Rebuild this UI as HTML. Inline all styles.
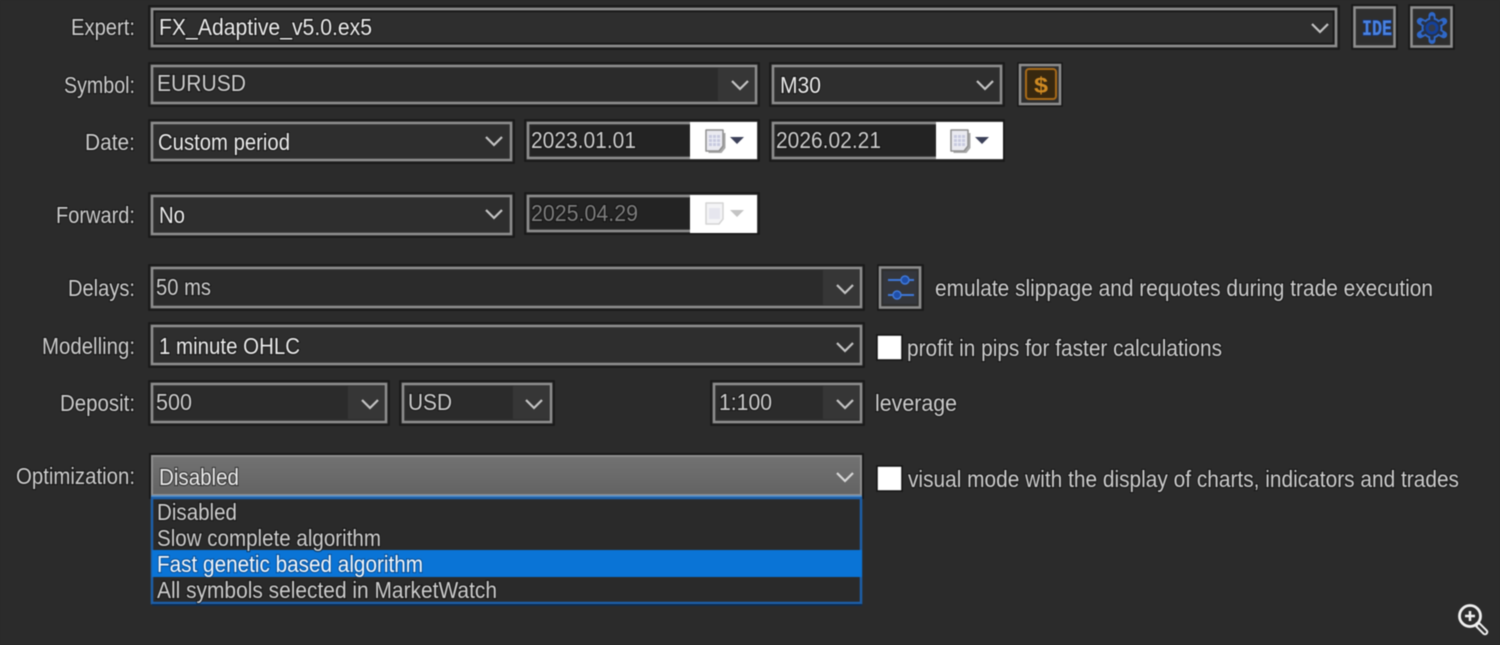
<!DOCTYPE html>
<html><head><meta charset="utf-8"><style>
html,body{margin:0;padding:0;background:#2b2b2b;width:1500px;height:645px;overflow:hidden}
svg{display:block;filter:blur(.55px)}
text{font-family:"Liberation Sans",sans-serif;font-size:23px;fill:#cdcdcd;stroke:rgba(10,10,10,.55);stroke-width:2.2px;paint-order:stroke}
.b{fill:#2e2e2e;stroke:#8e8e8e;stroke-width:2.5}
.h{fill:none;stroke:#181818;stroke-width:1.6}
.ed{fill:#2b2b2b}
.ar{fill:#363636}
.c{fill:none;stroke:#c4c4c4;stroke-width:2.2}
.w{fill:#ececec}
.d{fill:#7d7d7d}
</style></head><body>
<svg width="1500" height="645" viewBox="0 0 1500 645" xmlns="http://www.w3.org/2000/svg">
<rect width="1500" height="645" fill="#2b2b2b"/>

<!-- Labels -->
<g text-anchor="start">
<text x="71" y="35" textLength="64" lengthAdjust="spacingAndGlyphs">Expert:</text>
<text x="64" y="93" textLength="71" lengthAdjust="spacingAndGlyphs">Symbol:</text>
<text x="85" y="150" textLength="50" lengthAdjust="spacingAndGlyphs">Date:</text>
<text x="56" y="223" textLength="79" lengthAdjust="spacingAndGlyphs">Forward:</text>
<text x="68" y="296" textLength="67" lengthAdjust="spacingAndGlyphs">Delays:</text>
<text x="42" y="354" textLength="93" lengthAdjust="spacingAndGlyphs">Modelling:</text>
<text x="60" y="411" textLength="75" lengthAdjust="spacingAndGlyphs">Deposit:</text>
<text x="16" y="484" textLength="119" lengthAdjust="spacingAndGlyphs">Optimization:</text>
</g>

<!-- Expert -->
<rect x="149" y="6" width="1190" height="43" class="h"/>
<rect x="152" y="9" width="1184" height="37" class="b"/>
<rect x="154.500" y="11.500" width="1179" height="32" class="h" stroke-width="1"/>
<text x="159" y="35" textLength="213" lengthAdjust="spacingAndGlyphs" class="w">FX_Adaptive_v5.0.ex5</text>
<path d="M1312 24l8 8 8-8" class="c"/>

<!-- IDE button -->
<rect x="1352" y="5" width="45" height="44" class="h"/>
<rect x="1354.500" y="7.500" width="40" height="39" class="b"/>
<text x="1362" y="35" textLength="30" lengthAdjust="spacingAndGlyphs" style="fill:#4a82e0;stroke:#173a80;stroke-width:1.500px;font-size:22px;font-weight:bold;font-family:'Liberation Mono',monospace">IDE</text>

<!-- Gear button -->
<rect x="1409" y="5" width="45" height="44" class="h"/>
<rect x="1411.500" y="7.500" width="40" height="39" class="b"/>
<path d="M1432 15.500v3.500M1443.700 21.250l-3 1.750M1443.700 34.750l-3-1.750M1432 40.500v-3.500M1420.300 34.750l3-1.750M1420.300 21.250l3 1.750" stroke="#2f68c8" stroke-width="7" stroke-linecap="round" fill="none"/>
<circle cx="1432" cy="28" r="10.500" fill="#2f68c8"/>
<path d="M1432 17.500v2M1441 22.750l-1.700 1M1441 33.250l-1.700-1M1432 38.500v-2M1423 33.250l1.700-1M1423 22.750l1.700 1" stroke="#26324a" stroke-width="3.500" stroke-linecap="round" fill="none"/>
<circle cx="1432" cy="28" r="8.500" fill="#26324a"/>
<circle cx="1432" cy="28" r="5" fill="#343c4c" stroke="#14409a" stroke-width="3"/>

<!-- Symbol -->
<rect x="149" y="63" width="610" height="43" class="h"/>
<rect x="152" y="66" width="604" height="37" class="b"/>
<rect x="154" y="68" width="564" height="33" class="ed"/>
<rect x="718" y="68" width="36" height="33" class="ar"/>
<text x="157" y="91" textLength="89" lengthAdjust="spacingAndGlyphs">EURUSD</text>
<path d="M732 81l8 8 8-8" class="c"/>

<!-- M30 -->
<rect x="770" y="63" width="234" height="43" class="h"/>
<rect x="773" y="66" width="228" height="37" class="b"/>
<text x="780" y="93" textLength="41" lengthAdjust="spacingAndGlyphs" class="w">M30</text>
<path d="M977 81l8 8 8-8" class="c"/>

<!-- Dollar button -->
<rect x="1018" y="63" width="44" height="43" class="h"/>
<rect x="1020" y="65" width="40" height="39" class="b"/>
<rect x="1026" y="69" width="30" height="30" rx="3" fill="#38280f" stroke="#a86a18" stroke-width="2"/>
<text x="1034" y="93" textLength="14" lengthAdjust="spacingAndGlyphs" style="fill:#cf8a22;stroke:none;font-size:22px;font-weight:bold">$</text>

<!-- Date -->
<rect x="149" y="120" width="365" height="43" class="h"/>
<rect x="152" y="123" width="359" height="37" class="b"/>
<text x="158" y="150" textLength="132" lengthAdjust="spacingAndGlyphs" class="w">Custom period</text>
<path d="M486 137l8 8 8-8" class="c"/>

<!-- Date from -->
<rect x="525" y="120" width="234" height="41" class="h"/>
<rect x="528" y="123" width="228" height="35" class="b"/>
<rect x="530" y="125" width="160" height="31" fill="#232323"/>
<rect x="690" y="122" width="67" height="37" fill="#fff"/>
<text x="531" y="148" textLength="105" lengthAdjust="spacingAndGlyphs">2023.01.01</text>
<path d="M707 132h17v15l-4 5h-13z" fill="#a8a8a8" transform="translate(1.500 1)"/>
<path d="M706 130h17v16l-4 5h-13z" fill="#eaeaf0" stroke="#8f8f8f" stroke-width="1.500" stroke-linejoin="round"/>
<rect x="709" y="135" width="11" height="11" fill="#c8cadf"/>
<path d="M712.500 135v11M716.500 135v11M709 138.500h11M709 142.500h11" stroke="#eceef6" stroke-width="1"/>
<path d="M730 137h14l-7 7z" fill="#3b4058"/>

<!-- Date to -->
<rect x="770" y="120" width="234" height="41" class="h"/>
<rect x="773" y="123" width="228" height="35" class="b"/>
<rect x="775" y="125" width="161" height="31" fill="#232323"/>
<rect x="936" y="122" width="67" height="37" fill="#fff"/>
<text x="776" y="148" textLength="105" lengthAdjust="spacingAndGlyphs">2026.02.21</text>
<path d="M952 132h17v15l-4 5h-13z" fill="#a8a8a8" transform="translate(1.500 1)"/>
<path d="M951 130h17v16l-4 5h-13z" fill="#eaeaf0" stroke="#8f8f8f" stroke-width="1.500" stroke-linejoin="round"/>
<rect x="954" y="135" width="11" height="11" fill="#c8cadf"/>
<path d="M957.500 135v11M961.500 135v11M954 138.500h11M954 142.500h11" stroke="#eceef6" stroke-width="1"/>
<path d="M975 137h14l-7 7z" fill="#3b4058"/>

<!-- Forward -->
<rect x="149" y="193" width="365" height="44" class="h"/>
<rect x="152" y="196" width="359" height="38" class="b"/>
<text x="159" y="223" textLength="26" lengthAdjust="spacingAndGlyphs" class="w">No</text>
<path d="M486 210l8 8 8-8" class="c"/>

<!-- Forward date -->
<rect x="525" y="193" width="234" height="41" class="h"/>
<rect x="528" y="196" width="228" height="35" class="b"/>
<rect x="530" y="198" width="160" height="31" fill="#232323"/>
<rect x="690" y="195" width="67" height="38" fill="#fff"/>
<text x="531" y="221" textLength="107" lengthAdjust="spacingAndGlyphs" class="d">2025.04.29</text>
<path d="M706 203h17v16l-4 5h-13z" fill="#f4f4f6" stroke="#d4d4d4" stroke-width="1.500" stroke-linejoin="round"/>
<rect x="709" y="208" width="11" height="11" fill="#e6e6ee"/>
<path d="M730 210h14l-7 7z" fill="#c4c4c4"/>

<!-- Delays -->
<rect x="149" y="265" width="715" height="45" class="h"/>
<rect x="152" y="268" width="709" height="39" class="b"/>
<rect x="154" y="270" width="669" height="35" class="ed"/>
<rect x="823" y="270" width="36" height="35" class="ar"/>
<text x="156" y="295" textLength="55" lengthAdjust="spacingAndGlyphs">50 ms</text>
<path d="M837 285l8 8 8-8" class="c"/>

<!-- Sliders button -->
<rect x="878" y="265" width="45" height="45" class="h"/>
<rect x="880" y="267.500" width="40" height="40" class="b"/>
<rect x="883" y="271" width="34" height="33" fill="#34363c"/>
<path d="M888 280h26M888 295h26" stroke="#3f78d8" stroke-width="2"/>
<circle cx="905" cy="280" r="4" fill="#1f4ea8" stroke="#3f78d8" stroke-width="1.500"/>
<circle cx="897" cy="295" r="4" fill="#1f4ea8" stroke="#3f78d8" stroke-width="1.500"/>
<text x="935" y="296" textLength="498" lengthAdjust="spacingAndGlyphs">emulate slippage and requotes during trade execution</text>

<!-- Modelling -->
<rect x="149" y="323" width="715" height="44" class="h"/>
<rect x="152" y="326" width="709" height="38" class="b"/>
<text x="159" y="354" textLength="141" lengthAdjust="spacingAndGlyphs" class="w">1 minute OHLC</text>
<path d="M837 343l8 8 8-8" class="c"/>

<rect x="877" y="335" width="25" height="25" fill="#fff" stroke="#111" stroke-width="1.500"/>
<text x="907" y="356" textLength="315" lengthAdjust="spacingAndGlyphs">profit in pips for faster calculations</text>

<!-- Deposit -->
<rect x="149" y="381" width="240" height="44" class="h"/>
<rect x="152" y="384" width="234" height="38" class="b"/>
<rect x="154" y="386" width="194" height="33" class="ed"/>
<rect x="348" y="386" width="36" height="33" class="ar"/>
<text x="156" y="410" textLength="36" lengthAdjust="spacingAndGlyphs">500</text>
<path d="M362 400l8 8 8-8" class="c"/>

<!-- USD -->
<rect x="400" y="381" width="154" height="44" class="h"/>
<rect x="403" y="384" width="148" height="38" class="b"/>
<rect x="405" y="386" width="108" height="33" class="ed"/>
<rect x="513" y="386" width="36" height="33" class="ar"/>
<text x="408" y="410" textLength="44" lengthAdjust="spacingAndGlyphs">USD</text>
<path d="M526 400l8 8 8-8" class="c"/>

<!-- Leverage -->
<rect x="711" y="381" width="153" height="44" class="h"/>
<rect x="714" y="384" width="147" height="38" class="b"/>
<rect x="716" y="386" width="107" height="33" class="ed"/>
<rect x="823" y="386" width="36" height="33" class="ar"/>
<text x="719" y="410" textLength="53" lengthAdjust="spacingAndGlyphs">1:100</text>
<path d="M837 400l8 8 8-8" class="c"/>
<text x="875" y="411" textLength="82" lengthAdjust="spacingAndGlyphs">leverage</text>

<!-- Optimization -->
<defs><linearGradient id="g" x1="0" y1="0" x2="0" y2="1"><stop offset="0" stop-color="#727272"/><stop offset="1" stop-color="#636363"/></linearGradient></defs>
<rect x="149" y="453" width="715" height="46" fill="#181818"/>
<rect x="152" y="456" width="709" height="39" fill="url(#g)" stroke="#8f8f8f" stroke-width="2"/>
<path d="M151 496.500H862" stroke="#5c94cc" stroke-width="2.500"/>
<text x="159" y="485" textLength="80" lengthAdjust="spacingAndGlyphs" class="w">Disabled</text>
<path d="M837 473l8 8 8-8" class="c" style="stroke:#d8d8d8"/>

<rect x="877" y="466" width="25" height="25" fill="#fff" stroke="#111" stroke-width="1.500"/>
<text x="908" y="487" textLength="551" lengthAdjust="spacingAndGlyphs">visual mode with the display of charts, indicators and trades</text>

<!-- Dropdown list -->
<rect x="152" y="498" width="709" height="105" fill="#2a2a2a" stroke="#1d5fa8" stroke-width="2.500"/>
<rect x="152" y="550" width="710" height="27" fill="#0a74d6"/>
<path d="M152 605H862" stroke="#0f2c4e" stroke-width="2"/>
<text x="157" y="520" textLength="80" lengthAdjust="spacingAndGlyphs">Disabled</text>
<text x="157" y="546" textLength="224" lengthAdjust="spacingAndGlyphs">Slow complete algorithm</text>
<text x="157" y="572" textLength="266" lengthAdjust="spacingAndGlyphs" style="fill:#f2f6fa;stroke:rgba(8,50,100,.5)">Fast genetic based algorithm</text>
<text x="157" y="598" textLength="340" lengthAdjust="spacingAndGlyphs">All symbols selected in MarketWatch</text>

<!-- Zoom icon -->
<circle cx="1470" cy="616" r="10.500" fill="#2b2b2b" stroke="#f0f0f0" stroke-width="2.800"/>
<path d="M1465 616h10M1470 611v10" stroke="#f0f0f0" stroke-width="2.500"/>
<path d="M1478 625l7 7" stroke="#f0f0f0" stroke-width="6.500" stroke-linecap="round"/>
<path d="M1479 626l6 6" stroke="#2b2b2b" stroke-width="2.500" stroke-linecap="round"/>
</svg>
</body></html>
